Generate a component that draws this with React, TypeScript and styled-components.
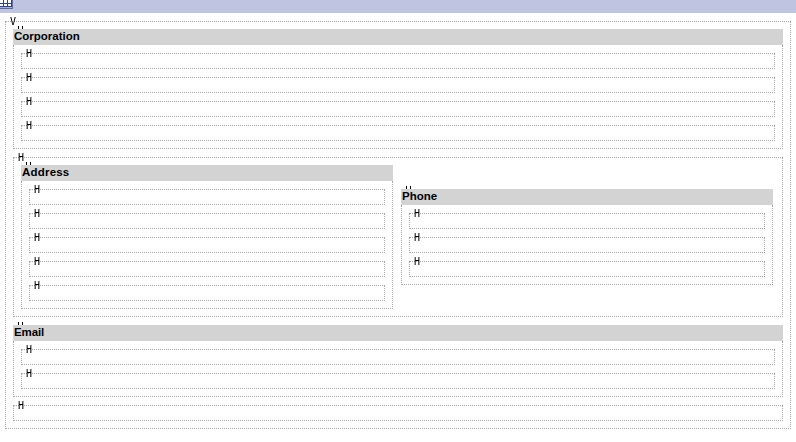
import React from "react";
import styled, { createGlobalStyle } from "styled-components";

const Global = createGlobalStyle`
  * { box-sizing: border-box; }
  body { margin: 0; background: #fff; font-family: "Liberation Sans", Arial, sans-serif; color: #000; }
`;

const Page = styled.main`
  height: 442px;
  overflow: hidden;
`;

const TitleBar = styled.header`
  height: 13px;
  background: #bfc4e0;
  svg { display: block; }
`;

const Box = styled.div`
  position: relative;
  border: 1px dotted #a9a9a9;
`;

const Root = styled(Box)`
  display: flex;
  flex-direction: column;
  gap: 8px;
  width: 786px;
  height: 408px;
  margin: 8px 0 0 5px;
  padding: 7px;
`;

const Columns = styled(Box)`
  display: flex;
  align-items: center;
  gap: 8px;
  width: 770px;
  height: 160px;
  padding: 7px;
`;

const Group = styled.section<{ $w: number }>`
  position: relative;
  flex: none;
  width: ${(p) => p.$w}px;
`;

const GroupTitle = styled.h2<{ $spacing: number }>`
  margin: 0;
  height: 16px;
  padding-left: 1px;
  background: #d3d3d3;
  font-size: 11.5px;
  line-height: 15px;
  font-weight: bold;
  letter-spacing: ${(p) => p.$spacing}px;
`;

const GroupBody = styled(Box)`
  display: flex;
  flex-direction: column;
  gap: 8px;
  border-top: 0;
  padding: 8px 7px 7px;
`;

const Row = styled(Box)`
  flex: none;
  height: 16px;
`;

const Mark = styled.span`
  position: absolute;
  left: 4px;
  top: -5px;
  font: 10px/10px "DejaVu Sans Mono", monospace;
  will-change: transform;
`;

const Ticks = styled.svg`
  position: absolute;
  left: 5px;
  top: -3px;
`;

const HRow = () => (
  <Row>
    <Mark>H</Mark>
  </Row>
);

interface FormGroupProps {
  title: string;
  rows: number;
  width: number;
  spacing: number;
}

function FormGroup({ title, rows, width, spacing }: FormGroupProps) {
  return (
    <Group $w={width}>
      <Ticks width="5" height="3" shapeRendering="crispEdges">
        <path d="M.5 0V3M4.5 0V3" stroke="#000" />
      </Ticks>
      <GroupTitle $spacing={spacing}>{title}</GroupTitle>
      <GroupBody>
        {Array.from({ length: rows }, (_, i) => <HRow key={i} />)}
      </GroupBody>
    </Group>
  );
}

export default function App() {
  return (
    <Page>
      <Global />
      <TitleBar>
        <svg width="13" height="9" shapeRendering="crispEdges">
          <rect width="13" height="9" fill="#666b96" />
          <rect width="12" height="8" fill="#a9b0d4" />
          <rect width="11" height="7" fill="#fff" />
          <path d="M0 3.5H11M0 6.5H11M3.5 0V7M7.5 0V7M11.5 0V7" stroke="#24479a" />
        </svg>
      </TitleBar>
      <Root>
        <Mark>V</Mark>
        <FormGroup title="Corporation" rows={4} width={770} spacing={0} />
        <Columns>
          <Mark>H</Mark>
          <FormGroup title="Address" rows={5} width={372} spacing={0.2} />
          <FormGroup title="Phone" rows={3} width={372} spacing={0} />
        </Columns>
        <FormGroup title="Email" rows={2} width={770} spacing={-0.1} />
        <HRow />
      </Root>
    </Page>
  );
}
